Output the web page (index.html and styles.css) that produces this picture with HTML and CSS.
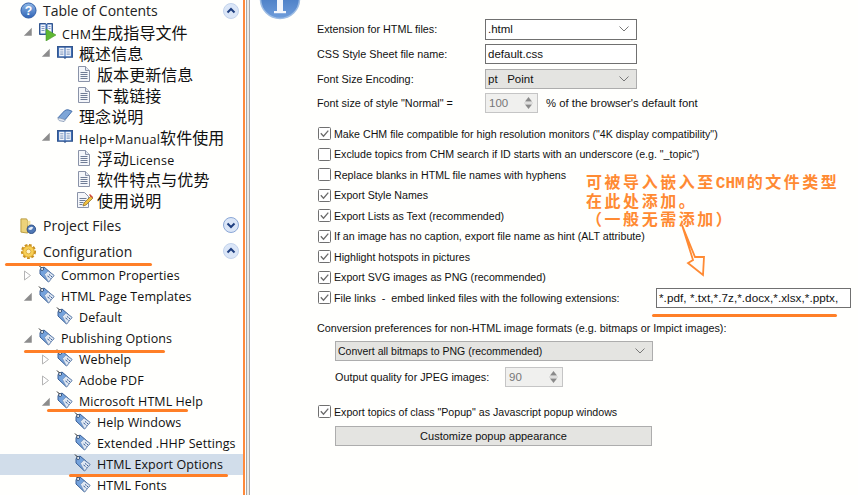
FILE: index.html
```html
<!DOCTYPE html>
<html lang="en">
<head>
<meta charset="utf-8">
<title>HTML Export Options</title>
<link rel="stylesheet" href="styles.css">
</head>
<body>
<svg class="defs" width="0" height="0">
  <defs>
    <linearGradient id="blue" x1="0" y1="0" x2="0" y2="1"><stop offset="0" stop-color="#8fb8e8"/><stop offset="1" stop-color="#2f63b5"/></linearGradient>
    <linearGradient id="infoblue" x1="0" y1="0" x2="0" y2="1"><stop offset="0" stop-color="#2f66b4"/><stop offset="1" stop-color="#6f9ddb"/></linearGradient>
    <symbol id="page" viewBox="0 0 14 16"><path d="M1.500.5h7l4 4v11h-11z" fill="#f4f6fa" stroke="#8a93a8"/><path d="M8.500.5v4h4" fill="#dfe5ef" stroke="#8a93a8"/><path d="M3.500 6.500h7M3.500 8.500h7M3.500 10.500h7M3.500 12.500h7" stroke="#6f7c95"/></symbol>
    <symbol id="pen" viewBox="0 0 18 17"><path d="M1.500 1.500h7l4 4v11h-11z" fill="#f4f6fa" stroke="#8a93a8"/><path d="M3.500 7.500h7M3.500 9.500h6M3.500 11.500h4M3.500 13.500h3" stroke="#6f7c95"/><path d="M7 15l1-3 7-7 2 2-7 7z" fill="#f0c040" stroke="#8a6a20" stroke-width=".7"/><path d="M14 3l3 3-1 1-3-3z" fill="#d0473c"/></symbol>
    <symbol id="book" viewBox="0 0 15 14"><path d="M.5 1.500h6.500l.5.700.5-.700h6.500v10h-6l-1 1-1-1h-6z" fill="#3d6db5" stroke="#33568f"/><path d="M2 2.500h5v8H2zM8 2.500h5v8H8z" fill="#f4f6fb"/><path d="M3 4.500h3M3 6.500h3M3 8.500h3M9 4.500h3M9 6.500h3M9 8.500h3" stroke="#8199c0"/></symbol>
    <symbol id="bookplay" viewBox="0 0 19 19"><path d="M1.500 1.500h6l1 .8 1-.8h5v11h-5l-1 1-1-1h-6z" fill="#3d6db5" stroke="#33568f"/><path d="M2.500 2.500h5v9h-5zM9.500 2.500h4v9h-4z" fill="#f4f6fb"/><path d="M3.500 4.500h3M3.500 6.500h3M3.500 8.500h3M10.500 4.500h2M10.500 6.500h2" stroke="#8199c0"/><path d="M8 7l10 6-10 6z" fill="#5fb832" stroke="#3f9020" stroke-width=".5"/></symbol>
    <symbol id="closed" viewBox="0 0 17 15"><path d="M1 10L8 2.500q2-1.500 4-1l4 1.500-7 8.500q-2 1.500-4 1z" fill="#7ea6d8" stroke="#3f6aa8"/><path d="M1 10q0 2 1.500 3l5 1 1.500-2-5-1.500z" fill="#e4e9f2" stroke="#6f86a8" stroke-width=".7"/></symbol>
    <symbol id="tag" viewBox="0 0 17 18"><path d="M1.500 4.500l4-2.500 10 8.500-5.500 6.500-8.500-8z" fill="#74a2dc" stroke="#3a5f96"/><path d="M6 9.500l3.500-3.500 6 4.500-5.500 6.500z" fill="#dfe7f2" stroke="#6c88b0" stroke-width=".6"/><path d="M9 11l1.500 1M10.500 9.500l1.500 1M11 12.500l1 1M12.500 11l1 1" stroke="#3a5f96"/><circle cx="3.600" cy="4" r="1.500" fill="#fff" stroke="#1c3860" stroke-width=".8"/><path d="M3 3L.500 .5" stroke="#222"/></symbol>
    <symbol id="arrowdown" viewBox="0 0 9 9"><path d="M8 1.500v6.500h-6.500z" fill="#8c8c8c"/></symbol>
    <symbol id="arrowright" viewBox="0 0 9 11"><path d="M1.500 1l6 4.500-6 4.500z" fill="#fff" stroke="#b4b4b4"/></symbol>
    <symbol id="tick" viewBox="0 0 13 13"><rect x=".5" y=".5" width="12" height="12" rx="1" fill="#fff" stroke="#707070"/><path d="M2.800 6.300l2.700 2.900 4.800-5.600" fill="none" stroke="#6b6b6b" stroke-width="1.300"/></symbol>
    <symbol id="untick" viewBox="0 0 13 13"><rect x=".5" y=".5" width="12" height="12" rx="1" fill="#fff" stroke="#707070"/></symbol>
    <symbol id="chev" viewBox="0 0 10 6"><path d="M.5.500L5 5 9.500.5" fill="none" stroke="#777"/></symbol>
    <symbol id="spin" viewBox="0 0 9 16"><path d="M4.500 2L8 6.500H1z" fill="#8a8a8a"/><path d="M4.500 14L8 9.500H1z" fill="#8a8a8a"/><path d="M0 8h9" stroke="#ccc"/></symbol>
    <symbol id="up" viewBox="0 0 16 16"><circle cx="8" cy="8" r="7.500" fill="#dbe6f7" stroke="#c3d3ec"/><path d="M4.500 9.500L8 6l3.500 3.500" fill="none" stroke="#1f3f80" stroke-width="2"/></symbol>
    <symbol id="down" viewBox="0 0 16 16"><circle cx="8" cy="8" r="7.500" fill="#dbe6f7" stroke="#8ba7d6"/><path d="M4.500 6.500L8 10l3.500-3.500" fill="none" stroke="#1f3f80" stroke-width="2"/></symbol>
  </defs>
</svg>

<main class="app">
  <nav class="sidebar">
    <div class="head head-first">
      <svg class="head-icon" viewBox="0 0 18 18"><circle cx="9" cy="9" r="8" fill="url(#blue)" stroke="#2c5aa5"/><text x="9" y="13.500" class="qmark">?</text></svg>
      <span class="head-label">Table of Contents</span>
      <svg class="head-btn"><use href="#up"/></svg>
    </div>
    <ul class="tree tree-toc">
      <li class="row l0"><svg class="tw"><use href="#arrowdown"/></svg><svg class="ic ic-big"><use href="#bookplay"/></svg><span class="cn"><span class="lat">CHM</span>生成指导文件</span></li>
      <li class="row l1"><svg class="tw"><use href="#arrowdown"/></svg><svg class="ic ic-book"><use href="#book"/></svg><span class="cn">概述信息</span></li>
      <li class="row l2"><span class="tw"></span><svg class="ic ic-page"><use href="#page"/></svg><span class="cn">版本更新信息</span></li>
      <li class="row l2"><span class="tw"></span><svg class="ic ic-page"><use href="#page"/></svg><span class="cn">下载链接</span></li>
      <li class="row l1"><span class="tw"></span><svg class="ic ic-book"><use href="#closed"/></svg><span class="cn">理念说明</span></li>
      <li class="row l1"><svg class="tw"><use href="#arrowdown"/></svg><svg class="ic ic-book"><use href="#book"/></svg><span class="cn"><span class="lat">Help+Manual</span>软件使用</span></li>
      <li class="row l2"><span class="tw"></span><svg class="ic ic-page"><use href="#page"/></svg><span class="cn">浮动<span class="lat">License</span></span></li>
      <li class="row l2"><span class="tw"></span><svg class="ic ic-page"><use href="#page"/></svg><span class="cn">软件特点与优势</span></li>
      <li class="row l2"><span class="tw"></span><svg class="ic ic-pen"><use href="#pen"/></svg><span class="cn">使用说明</span></li>
    </ul>
    <div class="head">
      <svg class="head-icon" viewBox="0 0 18 18"><path d="M1 2h6l1 2v13l-7-1z" fill="#ecd27a" stroke="#b99a3c"/><path d="M8 4h3v5H8z" fill="#f4e29c"/><circle cx="12" cy="13" r="4.500" fill="#4f78b5" stroke="#2e4f85"/><path d="M9 12q3-3 5-1q-2 4-5 2" fill="#e8eef7"/></svg>
      <span class="head-label">Project Files</span>
      <svg class="head-btn"><use href="#down"/></svg>
    </div>
    <div class="head">
      <svg class="head-icon" viewBox="0 0 18 18"><circle cx="9" cy="9" r="6" fill="#f5c33b" stroke="#c8901f" stroke-width="4" stroke-dasharray="2.500 1.500"/><circle cx="9" cy="9" r="6" fill="#f7cf55" stroke="#d9a02a"/><circle cx="9" cy="9" r="2.500" fill="#fff4c9" stroke="#c8901f" stroke-width=".6"/></svg>
      <span class="head-label">Configuration</span>
      <svg class="head-btn"><use href="#up"/></svg>
    </div>
    <ul class="tree tree-config">
      <li class="row l0"><svg class="tw"><use href="#arrowright"/></svg><svg class="ic ic-tag"><use href="#tag"/></svg><span>Common Properties</span></li>
      <li class="row l0"><svg class="tw"><use href="#arrowdown"/></svg><svg class="ic ic-tag"><use href="#tag"/></svg><span>HTML Page Templates</span></li>
      <li class="row l1"><span class="tw"></span><svg class="ic ic-tag"><use href="#tag"/></svg><span>Default</span></li>
      <li class="row l0"><svg class="tw"><use href="#arrowdown"/></svg><svg class="ic ic-tag"><use href="#tag"/></svg><span>Publishing Options</span></li>
      <li class="row l1"><svg class="tw"><use href="#arrowright"/></svg><svg class="ic ic-tag"><use href="#tag"/></svg><span>Webhelp</span></li>
      <li class="row l1"><svg class="tw"><use href="#arrowright"/></svg><svg class="ic ic-tag"><use href="#tag"/></svg><span>Adobe PDF</span></li>
      <li class="row l1"><svg class="tw"><use href="#arrowdown"/></svg><svg class="ic ic-tag"><use href="#tag"/></svg><span>Microsoft HTML Help</span></li>
      <li class="row l2"><span class="tw"></span><svg class="ic ic-tag"><use href="#tag"/></svg><span>Help Windows</span></li>
      <li class="row l2"><span class="tw"></span><svg class="ic ic-tag"><use href="#tag"/></svg><span>Extended .HHP Settings</span></li>
      <li class="row l2 selected"><span class="tw"></span><svg class="ic ic-tag"><use href="#tag"/></svg><span>HTML Export Options</span></li>
      <li class="row l2"><span class="tw"></span><svg class="ic ic-tag"><use href="#tag"/></svg><span>HTML Fonts</span></li>
    </ul>
  </nav>

  <div class="splitter"></div>

  <section class="panel">
    <svg class="info" viewBox="0 0 44 22"><circle cx="21" cy="-1" r="19.500" fill="url(#infoblue)" stroke="#9dbce3" stroke-width="1.500"/><path d="M18 0h6v11h3v2.200H15V11h3z" fill="#f4f7fc"/></svg>

    <div class="form">
      <label class="lbl">Extension for HTML files:</label>
      <div class="combo"><span>.html</span><svg class="chev"><use href="#chev"/></svg></div>
      <label class="lbl">CSS Style Sheet file name:</label>
      <div class="input">default.css</div>
      <label class="lbl">Font Size Encoding:</label>
      <div class="combo combo-gray"><span>pt&nbsp;&nbsp;&nbsp;Point</span><svg class="chev"><use href="#chev"/></svg></div>
      <label class="lbl">Font size of style "Normal" =</label>
      <div class="spin-row"><div class="spin"><span>100</span><svg class="spin-ic"><use href="#spin"/></svg></div><span>% of the browser's default font</span></div>
    </div>

    <ul class="checks">
      <li class="check"><svg class="cb"><use href="#tick"/></svg>Make CHM file compatible for high resolution monitors ("4K display compatibility")</li>
      <li class="check"><svg class="cb"><use href="#untick"/></svg>Exclude topics from CHM search if ID starts with an underscore (e.g. "_topic")</li>
      <li class="check"><svg class="cb"><use href="#untick"/></svg>Replace blanks in HTML file names with hyphens</li>
      <li class="check"><svg class="cb"><use href="#tick"/></svg>Export Style Names</li>
      <li class="check"><svg class="cb"><use href="#tick"/></svg>Export Lists as Text (recommended)</li>
      <li class="check"><svg class="cb"><use href="#tick"/></svg>If an image has no caption, export file name as hint (ALT attribute)</li>
      <li class="check"><svg class="cb"><use href="#tick"/></svg>Highlight hotspots in pictures</li>
      <li class="check"><svg class="cb"><use href="#tick"/></svg>Export SVG images as PNG (recommended)</li>
      <li class="check check-links"><svg class="cb"><use href="#tick"/></svg><span class="links-text">File links&nbsp; - &nbsp;embed linked files with the following extensions:</span><div class="ext">*.pdf, *.txt,*.7z,*.docx,*.xlsx,*.pptx,</div></li>
    </ul>

    <p class="conv">Conversion preferences for non-HTML image formats (e.g. bitmaps or Impict images):</p>
    <div class="sub">
      <div class="combo combo-gray combo-wide"><span>Convert all bitmaps to PNG (recommended)</span><svg class="chev"><use href="#chev"/></svg></div>
      <div class="quality"><span class="quality-label">Output quality for JPEG images:</span><div class="spin spin-wide"><span>90</span><svg class="spin-ic"><use href="#spin"/></svg></div></div>
    </div>
    <div class="check check-popup"><svg class="cb"><use href="#tick"/></svg>Export topics of class "Popup" as Javascript popup windows</div>
    <div class="sub"><button class="btn" type="button">Customize popup appearance</button></div>
  </section>
</main>

<div class="note"><p>可被导入嵌入至<b>CHM</b>的文件类型</p><p>在此处添加。</p><p>（一般无需添加）</p></div>
<svg class="arrow" viewBox="0 0 30 56"><path d="M1 1L12 36 7 39 22 51 23 33 14 33z" fill="#fffefb" stroke="#ff8a33" stroke-width="1.800"/></svg>
<div class="mark mark-config"></div>
<div class="mark mark-pub"></div>
<div class="mark mark-ms"></div>
<div class="mark mark-export"></div>
<div class="mark mark-ext"></div>
</body>
</html>
```
FILE: styles.css
```css
* { box-sizing: border-box; }
html, body { margin: 0; height: 100%; }
body {
  width: 858px;
  height: 495px;
  overflow: hidden;
  background: #fffffd;
  color: #111;
  font-family: "Liberation Sans", Arial, sans-serif;
  position: relative;
}
.defs { position: absolute; }
.app { display: flex; height: 495px; overflow: hidden; }

/* sidebar */
.sidebar { width: 243px; flex: none; overflow: hidden; }
.head { display: flex; align-items: center; height: 26px; padding-left: 20px; padding-right: 4px; }
.head-first { height: 21px; }
.head-icon { width: 17px; height: 17px; flex: none; }
.qmark { font: bold 13px "Liberation Sans", sans-serif; fill: #fff; text-anchor: middle; }
.head-label { flex: 1; margin-left: 6px; font: 14px "Open Sans", sans-serif; color: #222; }
.head-btn { width: 16px; height: 16px; flex: none; }
.tree { list-style: none; margin: 0; padding: 0; }
.tree-toc { padding-bottom: 2px; }
.tree-config { padding-top: 1px; }
.row {
  display: flex;
  align-items: center;
  height: 21px;
  font: 12.500px "Open Sans", sans-serif;
  letter-spacing: .07px;
  color: #111;
  white-space: nowrap;
}
.l0 { padding-left: 22px; }
.l1 { padding-left: 40px; }
.l2 { padding-left: 58px; }
.selected { background: #d1ddea; }
.tw { width: 11px; height: 11px; flex: none; margin-right: 4px; }
.ic { width: 20px; height: 18px; flex: none; margin-right: 4px; }
.ic-big { margin-left: 1px; margin-right: 5px; width: 19px; height: 19px; }
.ic-book { width: 16px; height: 15px; margin-left: 2px; margin-right: 6px; }
.ic-page { width: 14px; height: 16px; margin-left: 4px; margin-right: 6px; }
.ic-pen { width: 18px; height: 17px; margin-left: 3px; margin-right: 3px; }
.ic-tag { width: 18px; height: 18px; margin-left: 1px; margin-right: 5px; margin-top: -3px; }
.cn { font: 16px "Noto Sans CJK SC", sans-serif; }
.lat { font: 12.500px "Open Sans", sans-serif; letter-spacing: .3px; }

.splitter {
  width: 9px;
  flex: none;
  border-left: 2px solid #ff8a3a;
  background: linear-gradient(to right, #fff 0 1px, #a8a8a8 1px 2px, #eceae6 2px 4px, #a8a8a8 4px 5px, #fff 5px);
}

/* panel */
.panel { position: relative; flex: 1; font-size: 10.650px; padding: 19px 0 0 65px; min-width: 0; }
.info { position: absolute; left: 7px; top: 0; width: 44px; height: 22px; }
.form { display: grid; grid-template-columns: 168px 152px; row-gap: 4.300px; align-items: center; font-size: 10.800px; }
.combo, .input {
  display: flex; align-items: center; justify-content: space-between;
  height: 20.500px; padding: 0 4px 0 2px; border: 1px solid #707070; background: #fff; font-size: 11.500px;
}
.combo-gray { background: #e4e4e1; border-color: #adadad; }
.chev { width: 10px; height: 6px; margin-right: 3px; }
.spin-row { display: flex; align-items: center; gap: 8px; width: 420px; white-space: nowrap; font-size: 11.300px; }
.spin { display: flex; align-items: center; justify-content: space-between; width: 53px; height: 20px; padding: 0 4px 0 3px; border: 1px solid #c5c5c5; background: #f0f0ee; color: #777; font-size: 11.500px; }
.spin-wide { width: 58px; }
.spin-ic { width: 9px; height: 16px; }

.checks { list-style: none; margin: 10px 0 0; padding: 0; }
.check { display: flex; align-items: center; height: 20.500px; white-space: nowrap; }
.cb { width: 13px; height: 13px; flex: none; margin: 0 3px 0 1px; }
.links-text { width: 322px; font-size: 10.750px; }
.ext { width: 195px; height: 20px; padding: 0 2px; border: 1px solid #707070; background: #fff; line-height: 18px; font-size: 11.700px; letter-spacing: .05px; overflow: hidden; flex: none; }
.conv { margin: 13px 0 0; line-height: 14px; font-size: 10.800px; }
.sub { padding-left: 18px; }
.combo-wide { width: 318px; margin-top: 6px; font-size: 10.500px; }
.quality { display: flex; align-items: center; margin-top: 5.500px; }
.quality-label { width: 170px; font-size: 10.800px; }
.check-popup { margin-top: 14.500px; }
.btn { display: block; width: 317px; height: 20px; margin-top: 4px; border: 1px solid #adadad; background: #e4e4e1; font: 11px "Liberation Sans", Arial, sans-serif; color: #111; padding: 0; }

/* annotations */
.note { position: absolute; left: 586px; top: 172px; font: bold 16px/18.500px "Noto Sans CJK SC", sans-serif; letter-spacing: 2.550px; color: #ff8a33; white-space: nowrap; }
.note p { margin: 0; height: 18.500px; overflow: visible; }
.note b { font: bold 16px/18.500px "Liberation Mono", monospace; letter-spacing: 0; margin-right: 2px; }
.arrow { position: absolute; left: 681px; top: 224px; width: 30px; height: 56px; }
.mark { position: absolute; height: 3px; border-radius: 2px; background: #ff7f27; }
.mark-config { left: 5px; top: 263px; width: 147px; }
.mark-pub { left: 24px; top: 349.500px; width: 141px; }
.mark-ms { left: 47px; top: 409px; width: 141px; }
.mark-export { left: 69px; top: 474px; width: 159px; }
.mark-ext { left: 652px; top: 313.500px; width: 185px; }
```
